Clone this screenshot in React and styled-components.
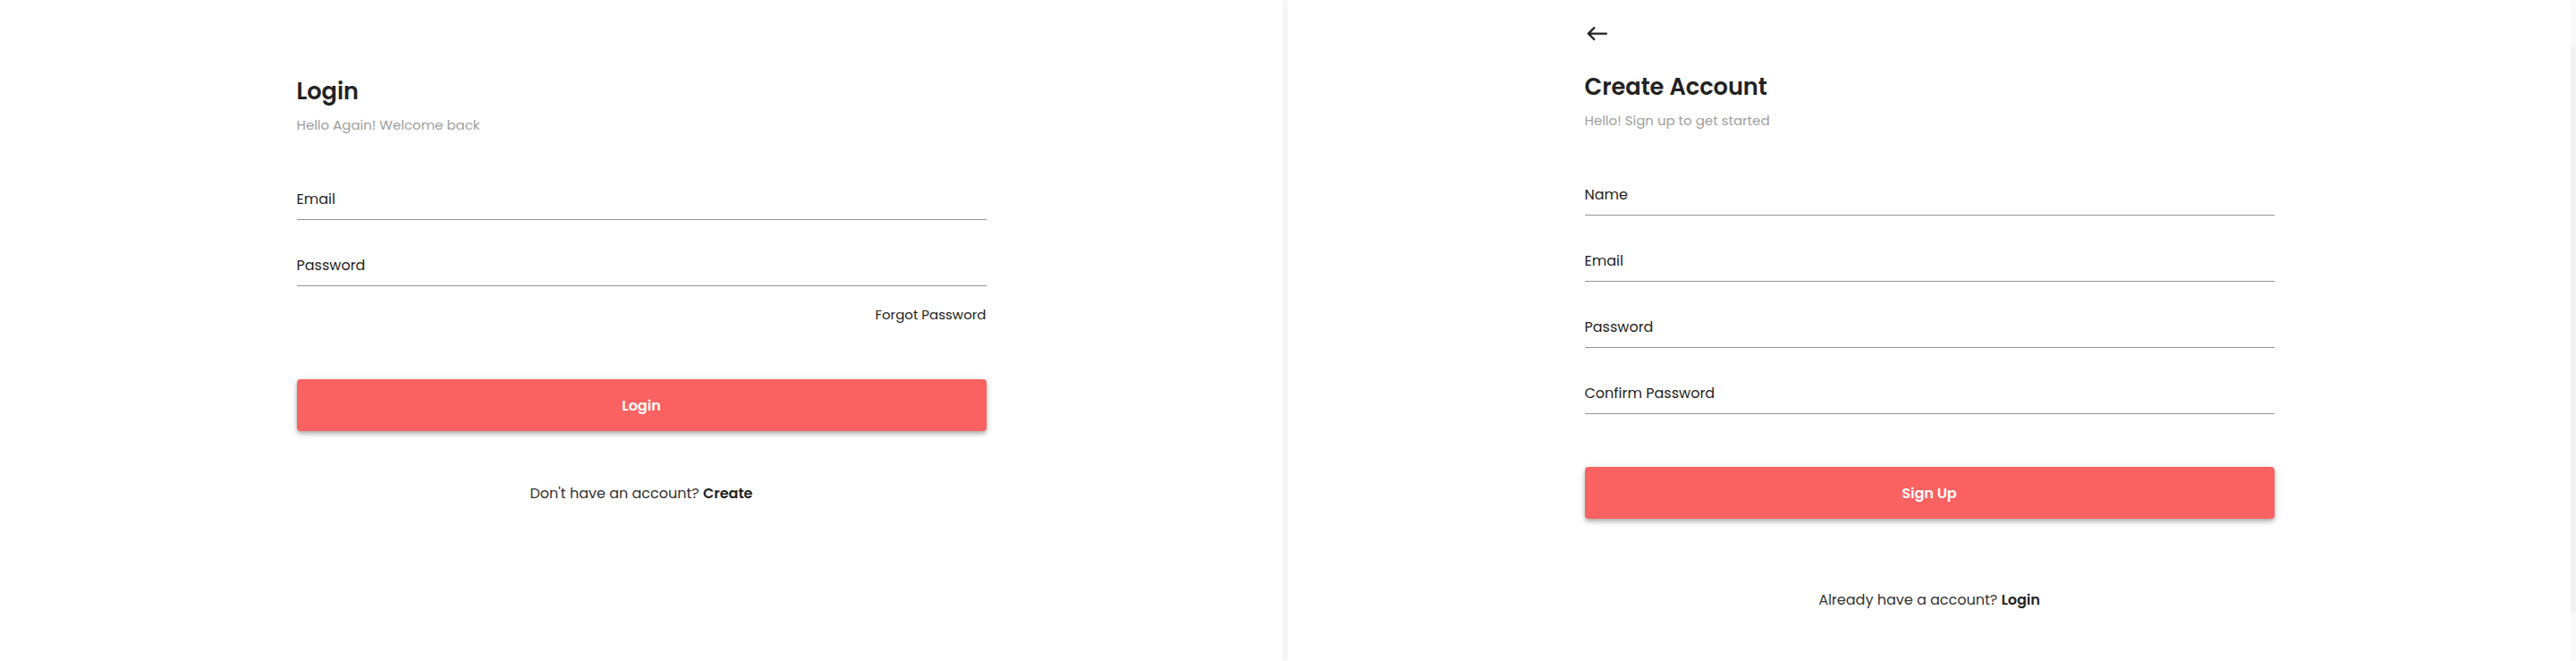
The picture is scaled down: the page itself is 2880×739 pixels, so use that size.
import React from "react"
import styled, { createGlobalStyle } from "styled-components"

const GlobalStyle = createGlobalStyle`
  html, body {
    margin: 0;
    padding: 0;
    background: #ffffff;
  }
  body {
    font-family: "Poppins", "Open Sans", sans-serif;
    color: #222222;
  }
  * {
    box-sizing: border-box;
  }
`

const Page = styled.div`
  display: flex;
  width: 2880px;
  height: 739px;
  overflow: hidden;
  background: #ffffff;
`

const Panel = styled.section`
  flex: 1;
  display: flex;
  height: 100%;
`

const PanelBody = styled.div`
  flex: 1;
  padding-top: ${(p) => p.$top}px;
`

const ScrollTrack = styled.div`
  width: 6px;
  height: 100%;
  border-radius: 3px;
  background: ${(p) => (p.$thumb ? "#f9f9f9" : "#f6f6f6")};
  display: flex;
  flex-direction: column;
`

const ScrollThumb = styled.div`
  margin-top: 52px;
  height: 632px;
  border-radius: 3px;
  background: #f1f1f1;
`

const Form = styled.form`
  width: 771px;
  margin: 0 auto;
  display: flex;
  flex-direction: column;
`

const BackButton = styled.button`
  align-self: flex-start;
  width: 27px;
  height: 27px;
  padding: 0;
  border: none;
  background: none;
  color: #222222;
  cursor: pointer;
  display: flex;

  svg {
    width: 27px;
    height: 27px;
    fill: currentColor;
  }
`

const Title = styled.h1`
  margin: ${(p) => p.$offset || 0}px 0 0;
  font-size: 25.6px;
  line-height: 34px;
  font-weight: 600;
  color: #222222;
`

const Subtitle = styled.p`
  margin: 10px 0 0;
  font-size: 15px;
  line-height: 22px;
  color: #9e9e9e;
`

const Fields = styled.div`
  display: flex;
  flex-direction: column;
  gap: 39px;
  margin-top: 60px;
`

const Field = styled.label`
  display: block;
  padding-bottom: 10px;
  border-bottom: 1px solid #949494;
  font-size: 16px;
  line-height: 24px;
  color: #1f1f24;
`

const ForgotLink = styled.a`
  align-self: flex-end;
  margin-top: 21px;
  font-size: 15px;
  line-height: 22px;
  color: #222222;
  text-decoration: none;
`

const SubmitButton = styled.button`
  margin-top: ${(p) => p.$offset}px;
  height: 58px;
  border: none;
  border-radius: 4px;
  background: #fa6262;
  color: #ffffff;
  font-family: inherit;
  font-size: 16px;
  font-weight: 600;
  cursor: pointer;
  box-shadow: 0px 2px 4px -1px rgba(0, 0, 0, 0.2),
    0px 4px 5px 0px rgba(0, 0, 0, 0.14), 0px 1px 10px 0px rgba(0, 0, 0, 0.12);
`

const Footer = styled.p`
  margin: ${(p) => p.$offset}px 0 0;
  text-align: center;
  font-size: 16px;
  line-height: 24px;
  color: #333333;

  strong {
    font-weight: 600;
    color: #222222;
  }
`

const WestIcon = () => (
  <svg viewBox="0 0 24 24" aria-hidden="true">
    <path d="M9 19l1.41-1.41L5.83 13H22v-2H5.83l4.59-4.59L9 5l-7 7 7 7z" />
  </svg>
)

const LoginPanel = () => (
  <Panel>
    <PanelBody $top={85}>
      <Form>
        <Title>Login</Title>
        <Subtitle>Hello Again! Welcome back</Subtitle>
        <Fields>
          <Field>Email</Field>
          <Field>Password</Field>
        </Fields>
        <ForgotLink href="#">Forgot Password</ForgotLink>
        <SubmitButton type="button" $offset={61}>
          Login
        </SubmitButton>
        <Footer $offset={58}>
          Don't have an account? <strong>Create</strong>
        </Footer>
      </Form>
    </PanelBody>
    <ScrollTrack />
  </Panel>
)

const SignupPanel = () => (
  <Panel>
    <PanelBody $top={24}>
      <Form>
        <BackButton type="button" aria-label="Back">
          <WestIcon />
        </BackButton>
        <Title $offset={29}>Create Account</Title>
        <Subtitle>Hello! Sign up to get started</Subtitle>
        <Fields>
          <Field>Name</Field>
          <Field>Email</Field>
          <Field>Password</Field>
          <Field>Confirm Password</Field>
        </Fields>
        <SubmitButton type="button" $offset={59}>
          Sign Up
        </SubmitButton>
        <Footer $offset={79}>
          Already have a account? <strong>Login</strong>
        </Footer>
      </Form>
    </PanelBody>
    <ScrollTrack $thumb>
      <ScrollThumb />
    </ScrollTrack>
  </Panel>
)

const App = () => (
  <>
    <GlobalStyle />
    <Page>
      <LoginPanel />
      <SignupPanel />
    </Page>
  </>
)

export default App
